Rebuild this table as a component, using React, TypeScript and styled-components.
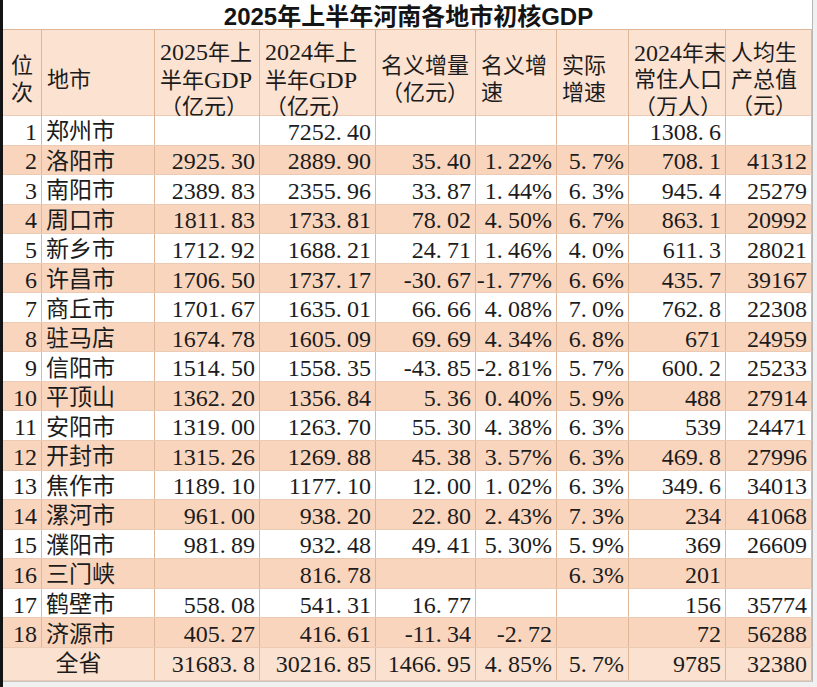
import React from 'react';
import styled, { createGlobalStyle } from 'styled-components';

const GlobalStyle = createGlobalStyle`
  *, *::before, *::after { box-sizing: border-box; }
  html, body { margin: 0; padding: 0; background: #f3f3f3; }
  body { font-family: "Liberation Serif", "Noto Sans CJK SC", serif; color: #1c1c1c; }
`;

const COLS = '39px 113px 105px 116px 100px 81px 72px 97px 86px';
const VLINE = '#e0b699';
const HLINE = '#eccbb4';
const WHITE = '#ffffff';
const STRIPE = '#f9d5bd';
const HEAD = '#fbe2d1';
const TOTAL = '#fbe1cf';

const Page = styled.div`
  width: 817px;
  height: 687px;
  display: flex;
  align-items: flex-start;
  background: #f1f1f1;
  overflow: hidden;
`;

const Edge = styled.div`
  flex: none;
  width: 3px;
  height: 687px;
  background: #141414;
`;

const Sheet = styled.div`
  flex: none;
  width: 810px;
  display: flex;
  flex-direction: column;
  background: #fff;
  border-right: 1px solid #b7b7b7;
  border-bottom: 1px solid #c4c4c4;
`;

const Title = styled.div`
  height: 29px;
  padding: 4px 0 0 2px;
  text-align: center;
  font-family: "Liberation Sans", "Noto Sans CJK SC", sans-serif;
  font-weight: 700;
  font-size: 24px;
  line-height: 25px;
  color: #141414;
`;

const Row = styled.div<{ $bg: string; $h: number; $top?: boolean }>`
  display: grid;
  grid-template-columns: ${COLS};
  height: ${(p) => p.$h}px;
  background: ${(p) => p.$bg};
  border-bottom: 1px solid ${HLINE};
  border-top: ${(p) => (p.$top ? `1px solid ${VLINE}` : 'none')};
`;

type Align = 'left' | 'right' | 'center';

const Cell = styled.div<{ $align?: Align; $span?: number; $lift?: number }>`
  display: flex;
  align-items: center;
  justify-content: ${(p) =>
    p.$align === 'left' ? 'flex-start' : p.$align === 'center' ? 'center' : 'flex-end'};
  grid-column: span ${(p) => p.$span ?? 1};
  padding: ${(p) => p.$lift ?? 3}px 4px 0 4px;
  border-right: 1px solid ${VLINE};
  font-size: 24px;
  line-height: 1;
  white-space: nowrap;
  color: #1c1c1c;
`;

const NameCell = styled(Cell)`
  font-size: 23px;
  padding-left: 4px;
`;

const HeadCell = styled.div<{ $align?: Align }>`
  display: flex;
  align-items: center;
  justify-content: ${(p) => (p.$align === 'center' ? 'center' : 'flex-start')};
  padding: 9px 3px 0 ${(p) => (p.$align === 'center' ? 3 : 5)}px;
  border-right: 1px solid ${VLINE};
  font-size: 22px;
  white-space: nowrap;
  color: #1c1c1c;
`;

const HeadText = styled.div`
  display: flex;
  flex-direction: column;
`;

const Line = styled.span`
  display: block;
  line-height: 26.5px;
`;

const Num = styled.span`
  font-size: 24px;
`;

const Dot = styled.span`
  margin-right: 0.22em;
`;

function fmt(v: string) {
  if (!v) return null;
  const i = v.indexOf('.');
  if (i < 0) return v;
  return (
    <>
      {v.slice(0, i)}
      <Dot>.</Dot>
      {v.slice(i + 1)}
    </>
  );
}

const headers: { lines: React.ReactNode[]; align?: Align }[] = [
  { lines: ['位', '次'], align: 'center' },
  { lines: ['地市'] },
  { lines: [<><Num>2025</Num>年上</>, <>半年<Num>GDP</Num></>, '（亿元）'] },
  { lines: [<><Num>2024</Num>年上</>, <>半年<Num>GDP</Num></>, '（亿元）'] },
  { lines: ['名义增量', '（亿元）'] },
  { lines: ['名义增', '速'] },
  { lines: ['实际', '增速'] },
  { lines: [<><Num>2024</Num>年末</>, '常住人口', '（万人）'] },
  { lines: ['人均生', '产总值', '（元）'] },
];

type Rec = [string, string, string, string, string, string, string, string, string];

const rows: Rec[] = [
  ['1', '郑州市', '', '7252.40', '', '', '', '1308.6', ''],
  ['2', '洛阳市', '2925.30', '2889.90', '35.40', '1.22%', '5.7%', '708.1', '41312'],
  ['3', '南阳市', '2389.83', '2355.96', '33.87', '1.44%', '6.3%', '945.4', '25279'],
  ['4', '周口市', '1811.83', '1733.81', '78.02', '4.50%', '6.7%', '863.1', '20992'],
  ['5', '新乡市', '1712.92', '1688.21', '24.71', '1.46%', '4.0%', '611.3', '28021'],
  ['6', '许昌市', '1706.50', '1737.17', '-30.67', '-1.77%', '6.6%', '435.7', '39167'],
  ['7', '商丘市', '1701.67', '1635.01', '66.66', '4.08%', '7.0%', '762.8', '22308'],
  ['8', '驻马店', '1674.78', '1605.09', '69.69', '4.34%', '6.8%', '671', '24959'],
  ['9', '信阳市', '1514.50', '1558.35', '-43.85', '-2.81%', '5.7%', '600.2', '25233'],
  ['10', '平顶山', '1362.20', '1356.84', '5.36', '0.40%', '5.9%', '488', '27914'],
  ['11', '安阳市', '1319.00', '1263.70', '55.30', '4.38%', '6.3%', '539', '24471'],
  ['12', '开封市', '1315.26', '1269.88', '45.38', '3.57%', '6.3%', '469.8', '27996'],
  ['13', '焦作市', '1189.10', '1177.10', '12.00', '1.02%', '6.3%', '349.6', '34013'],
  ['14', '漯河市', '961.00', '938.20', '22.80', '2.43%', '7.3%', '234', '41068'],
  ['15', '濮阳市', '981.89', '932.48', '49.41', '5.30%', '5.9%', '369', '26609'],
  ['16', '三门峡', '', '816.78', '', '', '6.3%', '201', ''],
  ['17', '鹤壁市', '558.08', '541.31', '16.77', '', '', '156', '35774'],
  ['18', '济源市', '405.27', '416.61', '-11.34', '-2.72', '', '72', '56288'],
];

const total = ['31683.8', '30216.85', '1466.95', '4.85%', '5.7%', '9785', '32380'];

export default function App() {
  return (
    <>
      <GlobalStyle />
      <Page>
        <Edge />
        <Sheet>
          <Title>2025年上半年河南各地市初核GDP</Title>
          <Row $bg={HEAD} $h={87} $top>
            {headers.map((h, i) => (
              <HeadCell key={i} $align={h.align}>
                <HeadText>
                  {h.lines.map((l, j) => (
                    <Line key={j}>{l}</Line>
                  ))}
                </HeadText>
              </HeadCell>
            ))}
          </Row>
          {rows.map((r, i) => (
            <Row key={r[0]} $bg={i % 2 === 0 ? WHITE : STRIPE} $h={29.56}>
              <Cell>{r[0]}</Cell>
              <NameCell $align="left">{r[1]}</NameCell>
              {r.slice(2).map((v, j) => (
                <Cell key={j}>{fmt(v)}</Cell>
              ))}
            </Row>
          ))}
          <Row $bg={TOTAL} $h={33}>
            <NameCell $align="center" $span={2} $lift={0}>
              全省
            </NameCell>
            {total.map((v, j) => (
              <Cell key={j} $lift={0}>
                {fmt(v)}
              </Cell>
            ))}
          </Row>
        </Sheet>
      </Page>
    </>
  );
}
